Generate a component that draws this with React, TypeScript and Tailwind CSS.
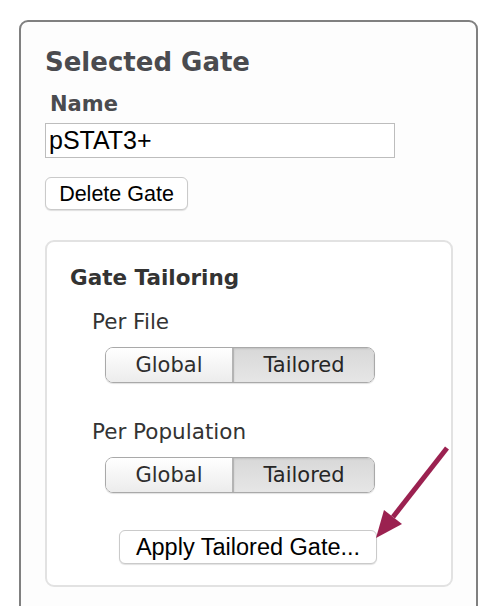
import React from "react";

const dv = "font-['DejaVu_Sans',Verdana,sans-serif]";
const ar = "font-['Liberation_Sans',Arial,sans-serif]";

function Segmented() {
  return (
    <div className={`ml-[35px] flex h-[36px] w-[270px] overflow-hidden rounded-[8px] border border-[#a9a9a9] shadow-[0_1px_1px_rgba(0,0,0,0.12)] ${dv}`}>
      <div className="flex w-[126px] items-center justify-center bg-gradient-to-b from-[#ffffff] to-[#ececec] pt-[2px] text-[21px] text-[#2e2e2e]">
        Global
      </div>
      <div className="w-[2px] bg-[#b4b4b4]" />
      <div className="flex flex-1 items-center justify-center bg-gradient-to-b from-[#d8d8d8] to-[#e6e6e6] pt-[2px] text-[21px] text-[#262626] shadow-[inset_0_1px_2px_rgba(0,0,0,0.12)]">
        Tailored
      </div>
    </div>
  );
}

export default function App() {
  return (
    <div className="relative h-[606px] w-[500px] overflow-hidden bg-white pl-[19px] pt-[20px]">
      <div className="h-[620px] w-[459px] rounded-[9px] border-2 border-[#808080] bg-[#fdfdfd] pl-[24px] pt-[25px]">
        <div className={`h-[30px] text-[26px] font-bold leading-[30px] text-[#4a4b4f] ${dv}`}>Selected Gate</div>
        <div className={`ml-[5px] mt-[15px] h-[24px] text-[21px] font-bold leading-[24px] text-[#4a4b4f] ${dv}`}>Name</div>
        <div className={`mt-[7px] flex h-[35px] w-[350px] items-center border border-[#bdbdbd] bg-white pl-[3px] text-[25px] text-black ${ar}`}>
          pSTAT3+
        </div>
        <div className={`mt-[19px] flex h-[33px] w-[143px] items-center justify-center rounded-[6px] border border-[#cacaca] bg-white pt-[2px] text-[21.5px] text-black shadow-[0_1px_1px_rgba(0,0,0,0.12)] ${ar}`}>
          Delete Gate
        </div>
        <div className="mt-[30px] h-[347px] w-[408px] rounded-[9px] border-2 border-[#e2e2e2] bg-white pl-[23px] pt-[23px]">
          <div className={`h-[26px] text-[21.5px] font-bold leading-[26px] text-[#333] ${dv}`}>Gate Tailoring</div>
          <div className={`ml-[22px] mt-[18px] h-[26px] text-[21.5px] leading-[26px] text-[#333] ${dv}`}>Per File</div>
          <div className="mt-[12px]">
            <Segmented />
          </div>
          <div className={`ml-[22px] mt-[36px] h-[26px] text-[21.5px] leading-[26px] text-[#333] ${dv}`}>Per Population</div>
          <div className="mt-[12px]">
            <Segmented />
          </div>
          <div className={`ml-[49px] mt-[37px] flex h-[34px] w-[258px] items-center justify-center rounded-[6px] border border-[#cacaca] bg-white pt-[2px] text-[23.5px] text-black shadow-[0_1px_1px_rgba(0,0,0,0.12)] ${ar}`}>
            Apply Tailored Gate...
          </div>
        </div>
      </div>
      <svg className="pointer-events-none absolute left-0 top-0" width="500" height="606" viewBox="0 0 500 606">
        <line x1="447" y1="448" x2="393" y2="517" stroke="#9b2150" strokeWidth="5" />
        <polygon points="376,538 384,510 402,524" fill="#9b2150" />
      </svg>
    </div>
  );
}
